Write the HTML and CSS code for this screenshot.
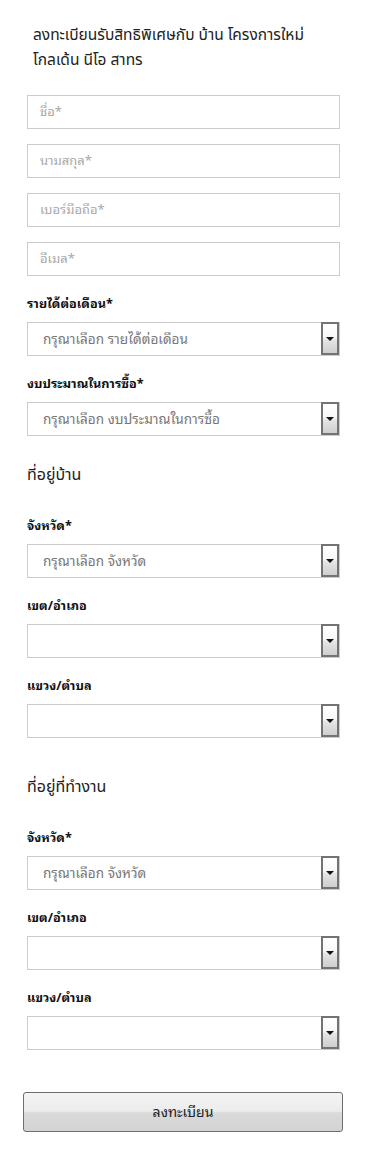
FILE: index.html
```html
<!DOCTYPE html>
<html lang="th">
<head>
<meta charset="utf-8">
<title>ลงทะเบียน</title>
<link rel="stylesheet" href="styles.css">
</head>
<body>
<form class="form">
  <h1 class="title">ลงทะเบียนรับสิทธิพิเศษกับ บ้าน โครงการใหม่ โกลเด้น นีโอ สาทร</h1>

  <div class="inputs">
    <input class="text" type="text" placeholder="ชื่อ*">
    <input class="text" type="text" placeholder="นามสกุล*">
    <input class="text" type="text" placeholder="เบอร์มือถือ*">
    <input class="text" type="text" placeholder="อีเมล*">
  </div>

  <div class="field">
    <label class="label">รายได้ต่อเดือน*</label>
    <div class="select"><span class="value">กรุณาเลือก รายได้ต่อเดือน</span><span class="arrow"></span></div>
  </div>
  <div class="field">
    <label class="label">งบประมาณในการซื้อ*</label>
    <div class="select"><span class="value">กรุณาเลือก งบประมาณในการซื้อ</span><span class="arrow"></span></div>
  </div>

  <h2 class="section">ที่อยู่บ้าน</h2>
  <div class="field field-first">
    <label class="label">จังหวัด*</label>
    <div class="select"><span class="value">กรุณาเลือก จังหวัด</span><span class="arrow"></span></div>
  </div>
  <div class="field">
    <label class="label">เขต/อำเภอ</label>
    <div class="select"><span class="value"></span><span class="arrow"></span></div>
  </div>
  <div class="field">
    <label class="label">แขวง/ตำบล</label>
    <div class="select"><span class="value"></span><span class="arrow"></span></div>
  </div>

  <h2 class="section section-work">ที่อยู่ที่ทำงาน</h2>
  <div class="field field-first">
    <label class="label">จังหวัด*</label>
    <div class="select"><span class="value">กรุณาเลือก จังหวัด</span><span class="arrow"></span></div>
  </div>
  <div class="field">
    <label class="label">เขต/อำเภอ</label>
    <div class="select"><span class="value"></span><span class="arrow"></span></div>
  </div>
  <div class="field">
    <label class="label">แขวง/ตำบล</label>
    <div class="select"><span class="value"></span><span class="arrow"></span></div>
  </div>

  <button class="submit" type="button">ลงทะเบียน</button>
</form>
</body>
</html>
```
FILE: styles.css
```css
* { box-sizing: border-box; }

html, body {
  margin: 0;
  padding: 0;
  background: #fff;
}

body {
  font-family: "Noto Sans Thai", Tahoma, "Noto Sans", "DejaVu Sans", sans-serif;
  color: #222;
}

.form {
  width: 313px;
  margin-left: 27px;
  padding-top: 23px;
  padding-bottom: 18px;
  display: flex;
  flex-direction: column;
}

.title {
  margin: 0 0 22px 6px;
  font-size: 15.5px;
  line-height: 25px;
  font-weight: normal;
  color: #222;
}

.inputs {
  display: flex;
  flex-direction: column;
  gap: 15px;
}

.text {
  display: block;
  width: 100%;
  height: 34px;
  margin: 0;
  border: 1px solid #ccc;
  padding: 0 12px 3px;
  font-family: "Noto Sans Thai Looped", Tahoma, "Noto Sans Thai", sans-serif;
  font-size: 13px;
  color: #333;
  outline: none;
}

.text::placeholder { color: #a8a8a8; }

.field {
  display: flex;
  flex-direction: column;
  margin-top: 16px;
}

.field-first { margin-top: 27px; }

.label {
  display: block;
  font-family: "Noto Sans Thai Looped", Tahoma, "Noto Sans Thai", sans-serif;
  font-size: 12.7px;
  line-height: 20px;
  font-weight: bold;
  color: #111;
  margin-bottom: 10px;
}

.select {
  display: flex;
  align-items: stretch;
  height: 34px;
  border: 1px solid #ccc;
  background: #fff;
}

.value {
  flex: 1;
  display: flex;
  align-items: center;
  padding-left: 15px;
  padding-bottom: 3px;
  font-family: "Noto Sans Thai Looped", Tahoma, "Noto Sans Thai", sans-serif;
  font-size: 13.6px;
  color: #777;
}

.arrow {
  width: 18px;
  margin-top: -1px;
  border: 2px solid #737373;
  background: linear-gradient(#ffffff 0%, #f7f7f7 45%, #e4e4e4 55%, #cfcfcf 100%);
  display: flex;
  align-items: center;
  justify-content: center;
}

.arrow::after {
  content: "";
  width: 0;
  height: 0;
  border-left: 4px solid transparent;
  border-right: 4px solid transparent;
  border-top: 4px solid #111;
}

.section {
  margin: 27px 0 0;
  font-size: 16px;
  line-height: 24px;
  font-weight: normal;
  color: #222;
}

.section-work { margin-top: 37px; }

.submit {
  margin: 42px 0 0 -4px;
  width: 320px;
  height: 40px;
  border: 1px solid #6d6d6d;
  border-radius: 3px;
  background: linear-gradient(#f4f4f4 0%, #ececec 48%, #dadada 52%, #d3d3d3 100%);
  font-family: "Noto Sans Thai Looped", Tahoma, "Noto Sans Thai", sans-serif;
  font-size: 14px;
  color: #222;
  padding: 0 0 3px;
}
```
